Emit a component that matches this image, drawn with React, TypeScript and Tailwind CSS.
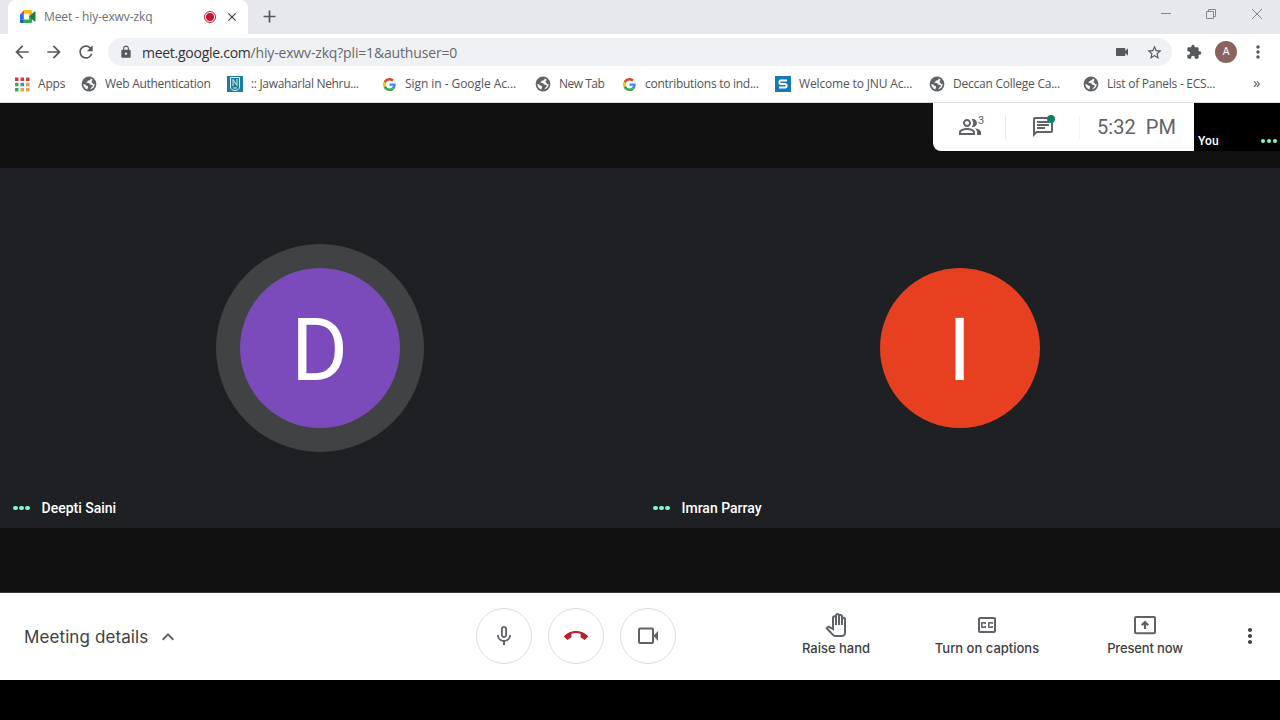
import React from "react";
import {
  MdArrowBack,
  MdArrowForward,
  MdCallEnd,
  MdClose,
  MdExtension,
  MdKeyboardArrowUp,
  MdLock,
  MdMicNone,
  MdMoreVert,
  MdOutlineChat,
  MdOutlineClosedCaption,
  MdOutlinePanTool,
  MdOutlinePeopleAlt,
  MdRefresh,
  MdStarBorder,
  MdVideocam,
} from "react-icons/md";

const GoogleIcon = () => (
  <svg width="13" height="13" viewBox="0 0 48 48">
    <path fill="#EA4335" d="M24 9.5c3.54 0 6.71 1.22 9.21 3.6l6.85-6.85C35.9 2.38 30.47 0 24 0 14.62 0 6.51 5.38 2.56 13.22l7.98 6.19C12.43 13.72 17.74 9.5 24 9.5z" />
    <path fill="#4285F4" d="M46.98 24.55c0-1.57-.15-3.09-.38-4.55H24v9.02h12.94c-.58 2.96-2.26 5.48-4.78 7.18l7.73 6c4.51-4.18 7.09-10.36 7.09-17.65z" />
    <path fill="#FBBC05" d="M10.53 28.59c-.48-1.45-.76-2.99-.76-4.59s.27-3.14.76-4.59l-7.98-6.19C.92 16.46 0 20.12 0 24c0 3.88.92 7.54 2.56 10.78l7.97-6.19z" />
    <path fill="#34A853" d="M24 48c6.48 0 11.93-2.13 15.89-5.81l-7.73-6c-2.15 1.45-4.92 2.3-8.16 2.3-6.26 0-11.57-4.22-13.47-9.91l-7.98 6.19C6.51 42.62 14.62 48 24 48z" />
  </svg>
);

const GlobeIcon = () => (
  <svg width="16" height="16" viewBox="0 0 16 16">
    <circle cx="8" cy="8" r="7.4" fill="#5f6368" />
    <path
      fill="#fff"
      d="M9.800 2.400c-.2 1.400-1.200 2-2.500 2.100-.4.900-1.500.9-1.700 1.700.1.700 1 .7 1.800.7 1 0 1.300 1 1.900 1.500.8.500 2.400.2 2.600 1.300.1.900-1.100 1.200-1.500 1.800-.4.700-.7 1.500-1.600 2 2.700-.5 4.700-2.500 5-5.200-.8.200-1.700-.1-2-.9-.3-.7-1.200-.8-1.300-1.600-.1-1 1-1.200 1.100-2.100a5.800 5.800 0 0 0-1.800-1.300zM2.200 8.300c.3 2.500 1.900 4.400 4.300 5.200.2-.9-.1-1.400.4-2.100.4-.7-.1-1.500-.9-1.600-1.200-.1-1.500-1.500-2.400-1.500z"
    />
  </svg>
);

const AppsIcon = () => (
  <svg width="15" height="15" viewBox="0 0 15 15">
    <path fill="#cf3b45" d="M0 .5h3.500V4H0zM5.500 .5H9V4H5.500zM11 .5h3.500V4H11z" />
    <path fill="#43a45c" d="M0 5.800h3.500v3.500H0z" />
    <path fill="#3f8fc0" d="M5.500 5.800H9v3.500H5.500z" />
    <path fill="#e0a546" d="M11 5.800h3.500v3.500H11z" />
    <path fill="#43a45c" d="M0 11h3.500v3.500H0z" />
    <path fill="#e0a546" d="M5.500 11H9v3.500H5.500zM11 11h3.500v3.500H11z" />
  </svg>
);

const UniversityIcon = () => (
  <svg width="16" height="16" viewBox="0 0 16 16">
    <path fill="#1b7f9c" d="M0 0h16v16H0z" />
    <path
      fill="none"
      stroke="#d8eef4"
      d="M3.500 1.500v9.500c0 2.200 1.800 3.500 4.500 3.500s4.500-1.300 4.500-3.500V1.500zM6 10V3.500l4 6V3M6 12h4"
    />
  </svg>
);

const SquareSIcon = () => (
  <svg width="16" height="16" viewBox="0 0 16 16">
    <path fill="#1778b8" d="M0 0h16v16H0z" />
    <path fill="none" stroke="#fff" strokeWidth="2" d="M12 4.500H5.500L4.500 5.500v1.500l1 1h5l1 1v1.500l-1 1H4" />
  </svg>
);

const MeetIcon = () => (
  <svg width="16" height="14" viewBox="0 0 16 14">
    <path fill="#ea4335" d="M0 4.2 4.2 0v4.2z" />
    <path fill="#1a73e8" d="M0 4.2h3.8v5.6H0z" />
    <path fill="#1558c0" d="M0 9.8h3.8V13H1.2A1.2 1.2 0 0 1 0 11.8z" />
    <path fill="#fbbc04" d="M4.2 0h6.6A1.2 1.2 0 0 1 12 1.200V5L9 7V3.800H4.200z" />
    <path fill="#34a853" d="M3.800 9.500H9V6.500l3 2v3.300A1.200 1.200 0 0 1 10.800 13h-7z" />
    <path fill="#188038" d="M9 6.500 14.300 1.800c.5-.4 1.200-.1 1.200.5v8.500c0 .6-.7.9-1.200.5z" />
  </svg>
);

const CameraIcon = () => (
  <svg width="24" height="24" viewBox="0 0 24 24">
    <rect x="3" y="4.500" width="14" height="14.500" rx="1" fill="none" stroke="currentColor" strokeWidth="2" />
    <path fill="currentColor" d="M17.500 11.800 22 7v10z" />
  </svg>
);

const PresentIcon = () => (
  <svg width="24" height="24" viewBox="0 0 24 24" fill="none" stroke="currentColor" strokeWidth="2">
    <rect x="2" y="4" width="20" height="16.200" rx="1" />
    <path d="M12 16V9.500M8.800 12.300 12 9l3.200 3.300" strokeWidth="2.200" />
  </svg>
);

const bookmarks = [
  { label: "Apps", icon: <AppsIcon />, className: "w-[67px] tracking-[-0.2px]" },
  { label: "Web Authentication", icon: <GlobeIcon />, className: "w-[146px] tracking-[-0.28px]" },
  { label: ":: Jawaharlal Nehru...", icon: <UniversityIcon />, className: "w-[154px] tracking-[-0.33px]" },
  { label: "Sign in - Google Ac...", icon: <GoogleIcon />, className: "w-[154px] tracking-[-0.06px]" },
  { label: "New Tab", icon: <GlobeIcon />, className: "w-[86px] tracking-[-0.5px]" },
  { label: "contributions to ind...", icon: <GoogleIcon />, className: "w-[154px] tracking-[-0.27px]" },
  { label: "Welcome to JNU Ac...", icon: <SquareSIcon />, className: "w-[154px] tracking-[-0.15px]" },
  { label: "Deccan College Ca...", icon: <GlobeIcon />, className: "w-[154px] tracking-[-0.24px]" },
  { label: "List of Panels - ECS...", icon: <GlobeIcon />, className: "w-[154px] tracking-[-0.25px]" },
];

const SpeakingDots = () => (
  <span className="flex gap-[1.5px]">
    <span className="size-[4.5px] rounded-full bg-[#83f5cf]" />
    <span className="size-[4.5px] rounded-full bg-[#83f5cf]" />
    <span className="size-[4.5px] rounded-full bg-[#83f5cf]" />
  </span>
);

const TabStrip = () => (
  <div className="flex h-[34px] bg-[#e7e8ec]">
    <div className="ml-2 flex w-60 items-center rounded-t-lg bg-white pl-3 text-[12px] text-[#6b6e73]">
      <MeetIcon />
      <span className="ml-2 w-[160px] tracking-[-0.1px]">Meet - hiy-exwv-zkq</span>
      <span className="flex size-3 items-center justify-center rounded-full border border-[#c5203a]">
        <span className="size-2 rounded-full bg-[#c5142f]" />
      </span>
      <MdClose className="ml-[9px] size-[14px] text-[#3c4043]" />
    </div>
    <svg className="mt-[10px] ml-[15px]" width="13" height="13" viewBox="0 0 13 13">
      <path stroke="#55585c" strokeWidth="1.700" d="M6.500 .5v12M.5 6.500h12" />
    </svg>
    <svg className="mt-2 mr-4 ml-auto" width="104" height="13" viewBox="0 0 104 13">
      <g fill="none" stroke="#85868a">
        <path d="M1 5.500h10" />
        <path d="M46.500 3.500h7v7h-7zM48.500 3.500v-2h7v7h-2" />
        <path d="m92 1 10 10M102 1 92 11" />
      </g>
    </svg>
  </div>
);

const AddressBar = () => (
  <div className="flex h-9 items-center pl-3 text-[#55585c]">
    <MdArrowBack className="size-5" />
    <MdArrowForward className="ml-3 size-5" />
    <MdRefresh className="ml-3 size-5" />
    <div className="ml-3 flex h-7 w-[1064px] items-center rounded-full bg-[#f0f1f4] pl-[11px]">
      <MdLock className="size-[14px]" />
      <span className="ml-[9px] text-[14px] tracking-[-0.27px] text-[#303134]">
        meet.google.com
        <span className="tracking-[-0.16px] text-[#65686d]">/hiy-exwv-zkq?pli=1&amp;authuser=0</span>
      </span>
      <MdVideocam className="ml-auto size-4" />
      <MdStarBorder className="mr-[9px] ml-4 size-[17px]" />
    </div>
    <MdExtension className="ml-[14px] size-4" />
    <span className="ml-[13px] flex size-[22px] items-center justify-center rounded-full bg-[#8a635f] font-[Roboto] text-[11px] text-white">
      A
    </span>
    <MdMoreVert className="ml-[11px] size-5" />
  </div>
);

const BookmarksBar = () => (
  <div className="flex h-[33px] items-center border-b border-[#dcdde0] pb-1 pl-[14px] text-[12px] text-[#505357]">
    {bookmarks.map((bookmark) => (
      <div key={bookmark.label} className={`flex shrink-0 items-center gap-2 ${bookmark.className}`}>
        <span className="flex w-4 justify-center">{bookmark.icon}</span>
        <span className="whitespace-nowrap">{bookmark.label}</span>
      </div>
    ))}
    <span className="ml-4 pb-1 text-[15px]">»</span>
  </div>
);

const MeetingStatus = () => (
  <div className="flex h-[65px] items-start justify-end">
    <div className="flex h-12 w-[261px] items-center rounded-bl-lg bg-white text-[#5f6368]">
      <div className="flex h-6 w-[73px] items-center border-r border-[#ececee] pl-[25px]">
        <MdOutlinePeopleAlt className="size-6" />
        <span className="mb-3 -ml-1 font-[Roboto] text-[11px]">3</span>
      </div>
      <div className="relative flex h-6 w-[74px] items-center justify-center border-r border-[#f4f4f6]">
        <MdOutlineChat className="size-6" />
        <span className="absolute top-0 right-6 size-2 rounded-full bg-[#128163]" />
      </div>
      <span className="ml-[17px] font-[Roboto] text-[20px] tracking-[0.05px] whitespace-pre">5:32  PM</span>
    </div>
    <div className="flex h-12 w-[86px] items-end justify-between bg-black pr-[3px] pb-px pl-1 font-[Roboto] text-[12px] tracking-[0.1px] text-white">
      <span className="font-medium">You</span>
      <span className="mb-[7px]">
        <SpeakingDots />
      </span>
    </div>
  </div>
);

interface TileProps {
  name: string;
  color: string;
  speaking?: boolean;
}

const ParticipantTile = ({ name, color, speaking }: TileProps) => (
  <div className="flex w-1/2 flex-col items-center bg-[#1e2024] pt-[76px] font-[Roboto] text-white">
    <div
      className={`flex size-52 shrink-0 items-center justify-center rounded-full ${
        speaking ? "bg-[#414244]" : ""
      }`}
    >
      <div className={`flex size-40 items-center justify-center rounded-full pt-1 pr-px text-[87px] leading-none ${color}`}>
        {name[0]}
      </div>
    </div>
    <div className="mt-auto mb-[9px] flex items-center gap-3 self-start pl-[13px] text-[14px] font-medium">
      <span className="pb-px">
        <SpeakingDots />
      </span>
      {name}
    </div>
  </div>
);

const RoundButton = ({ children }: { children: React.ReactNode }) => (
  <button className="flex size-14 items-center justify-center rounded-full border border-[#dadce0] text-[#5f6368]">
    {children}
  </button>
);

const ControlBar = () => (
  <div className="flex h-[88px] items-center border-t border-[#3a3a3a] bg-white font-['Inter'] text-[#3c4043]">
    <button className="flex w-[476px] items-center pl-6 text-[17px] tracking-[0.1px]">
      <span className="pt-[2px]">Meeting details</span>
      <MdKeyboardArrowUp className="ml-2 size-6 text-[#5f6368]" />
    </button>
    <div className="flex gap-4 pb-px">
      <RoundButton>
        <MdMicNone className="size-6" />
      </RoundButton>
      <RoundButton>
        <MdCallEnd className="size-6 text-[#b9202b]" />
      </RoundButton>
      <RoundButton>
        <CameraIcon />
      </RoundButton>
    </div>
    <div className="ml-auto flex items-center pb-[3px] text-[13px] leading-5 font-medium">
      <button className="flex w-[150px] flex-col items-center gap-px">
        <MdOutlinePanTool className="size-6 text-[#5f6368]" />
        Raise hand
      </button>
      <button className="flex w-[152px] flex-col items-center gap-px">
        <MdOutlineClosedCaption className="size-6 text-[#5f6368]" />
        Turn on captions
      </button>
      <button className="flex w-[164px] flex-col items-center gap-px tracking-[-0.15px] text-[#5f6368]">
        <PresentIcon />
        <span className="text-[#3c4043]">Present now</span>
      </button>
      <MdMoreVert className="mr-[18px] ml-[11px] size-6 translate-y-px" />
    </div>
  </div>
);

const App = () => {
  return (
    <div className="h-[720px] w-[1280px] overflow-hidden bg-black font-['Open_Sans',sans-serif]">
      <div className="bg-white">
        <TabStrip />
        <AddressBar />
        <BookmarksBar />
      </div>
      <div className="bg-[#111]">
        <MeetingStatus />
        <div className="flex h-[360px]">
          <ParticipantTile name="Deepti Saini" color="bg-[#7b4bbb]" speaking />
          <ParticipantTile name="Imran Parray" color="bg-[#e64021]" />
        </div>
        <div className="h-16" />
      </div>
      <ControlBar />
    </div>
  );
};

export default App;
